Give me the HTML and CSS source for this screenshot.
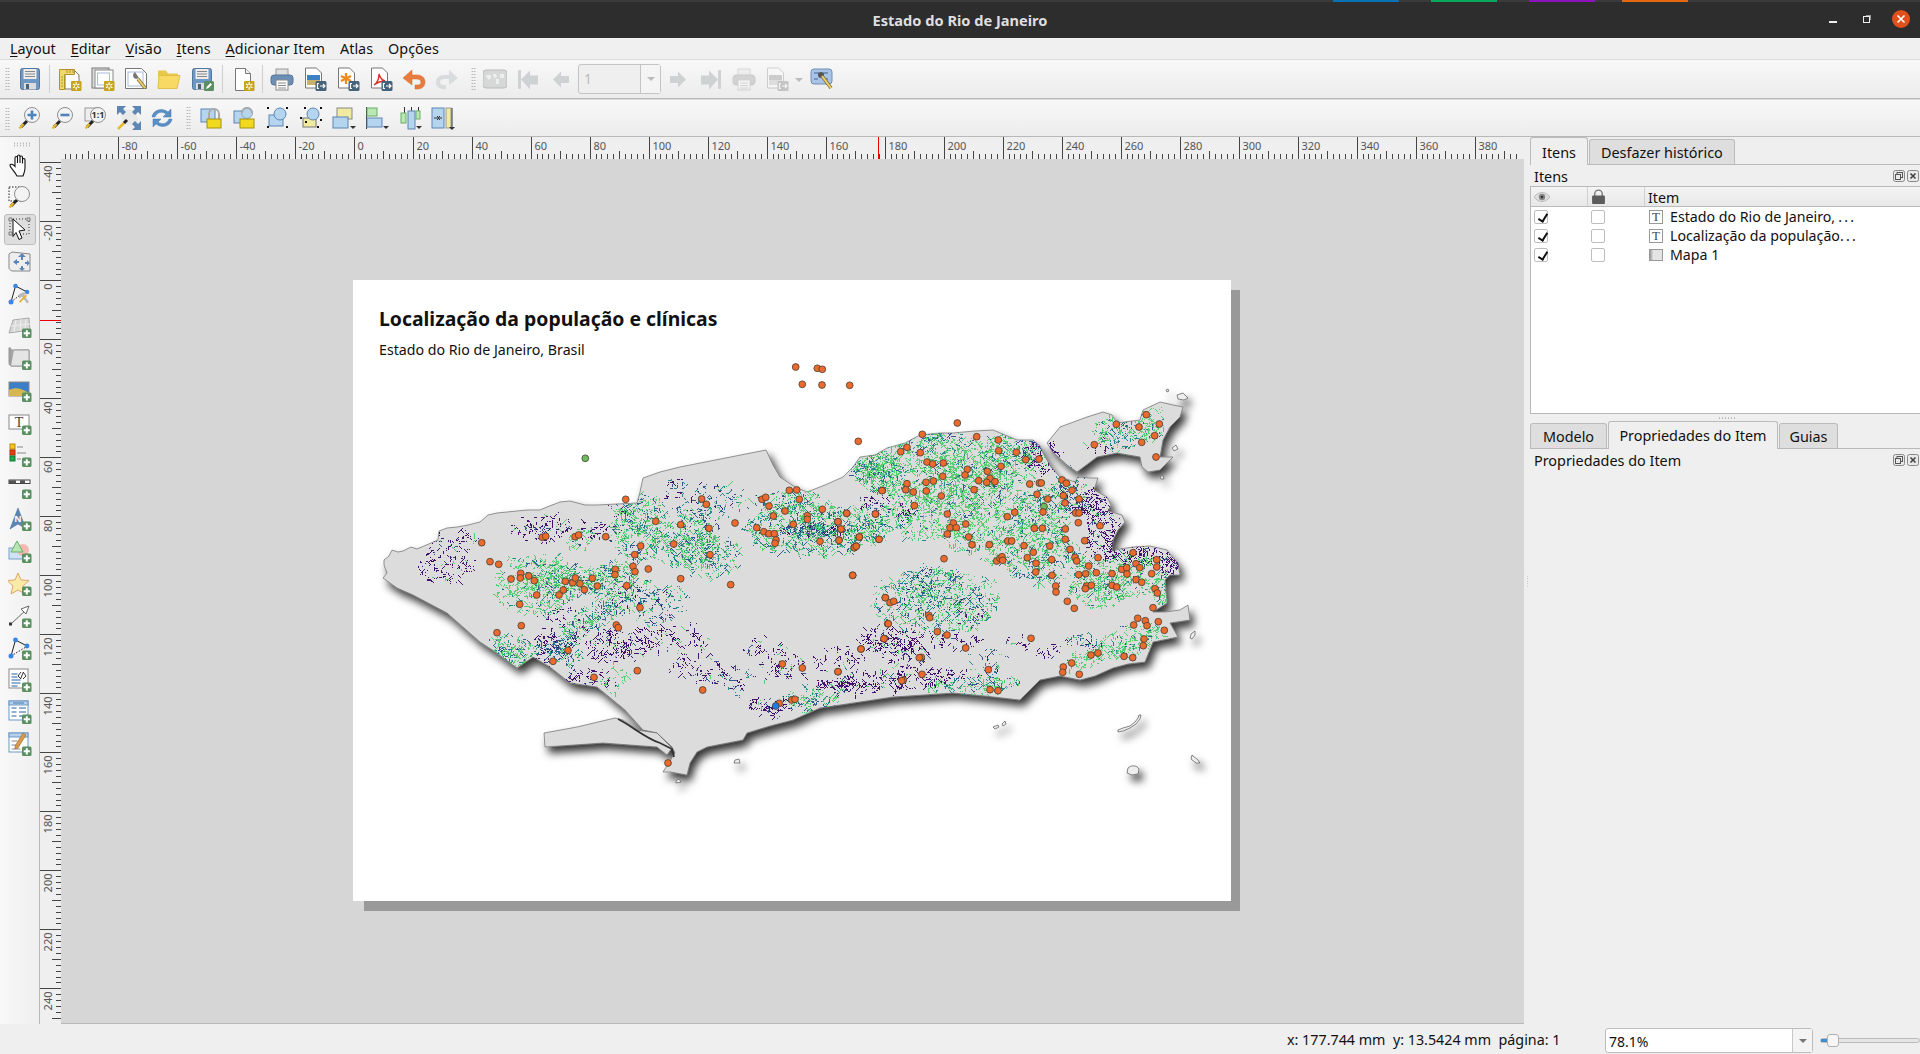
FILE: index.html
```html
<!DOCTYPE html>
<html lang="pt-BR">
<head>
<meta charset="utf-8">
<title>Estado do Rio de Janeiro</title>
<link rel="stylesheet" href="styles.css">
</head>
<body>
<svg class="sprite" aria-hidden="true">
<defs>
<linearGradient id="gGrey" x1="0" x2="1"><stop offset="0" stop-color="#999"/><stop offset="1" stop-color="#e8e8e8"/></linearGradient>
<symbol id="b-plus" viewBox="0 0 24 24"><rect x="14" y="14.5" width="9.5" height="9.5" rx="1.5" fill="#5a8f62"/><path d="M18.8 16.2v6.2M15.7 19.3h6.2" stroke="#fff" stroke-width="2"/></symbol>
<symbol id="b-star" viewBox="0 0 24 24"><rect x="13" y="14" width="10.5" height="10" rx="1" fill="#c6a51c"/><path d="M18.2 15.3v7.4M15 17l6.4 3.7M21.4 17L15 20.7" stroke="#fff" stroke-width="1.3"/><circle cx="18.2" cy="19" r="1.3" fill="#c6a51c"/></symbol>
<symbol id="b-exp" viewBox="0 0 24 24"><rect x="12.5" y="14" width="11" height="10" rx="1.5" fill="#46637c"/><path d="M16 16.5h-1.5v5H16M17 19h5M20 17l2 2-2 2" fill="none" stroke="#fff" stroke-width="1.2"/></symbol>
<symbol id="i-doc" viewBox="0 0 24 24"><path d="M4.5 1.5h10l5 5v17h-15z" fill="#fff" stroke="#777"/><path d="M14.5 1.5v5h5" fill="#eee" stroke="#777"/></symbol>
<symbol id="i-save" viewBox="0 0 24 24"><rect x="2.5" y="1.5" width="19" height="21" rx="2" fill="#6d97c4" stroke="#55789f"/><rect x="5.5" y="2" width="13" height="10" fill="#ececec"/><path d="M7 4.5h10M7 7h10M7 9.5h10" stroke="#888"/><rect x="6" y="16" width="12" height="6.5" fill="#dcdcdc"/><rect x="8" y="17" width="3" height="5" fill="#48607a"/></symbol>
<symbol id="i-saveas" viewBox="0 0 24 24"><use href="#i-save"/><rect x="14" y="14" width="10" height="10" rx="1.5" fill="#5a8f62"/><path d="M16 22l1-2.500 3.500-3.500 1.500 1.500-3.500 3.500z" fill="#fff"/></symbol>
<symbol id="i-new" viewBox="0 0 24 24"><path d="M7 3h9l5 5v14H7z" fill="#fff" stroke="#777"/><path d="M1.500 2.500h15v5H6.500v15h-5z" fill="#f2d76b" stroke="#b3912d"/><path d="M3 10h2M3 13h2M3 16h2M3 19h2M9 3v3M12 3v3M15 3v3" stroke="#b3912d"/><use href="#b-star"/></symbol>
<symbol id="i-dup" viewBox="0 0 24 24"><rect x="1" y="1" width="17" height="20" fill="#ddd" stroke="#777"/><rect x="4" y="3" width="18" height="18" fill="#fff" stroke="#888"/><rect x="6.500" y="6" width="12" height="12" fill="#fff" stroke="#a8bcdb"/><use href="#b-star"/></symbol>
<symbol id="i-manager" viewBox="0 0 24 24"><path d="M1.500 1.500h16l5 5v15h-21z" fill="#fff" stroke="#777"/><rect x="4" y="5" width="15" height="14" fill="none" stroke="#a8bcdb"/><path d="M11 5a4 4 0 0 0-1 6l2 1 3-1z" fill="#777"/><path d="M14 12l7 9" stroke="#7a6a30" stroke-width="3.500"/><path d="M14 12l7 9" stroke="#ecd069" stroke-width="2"/></symbol>
<symbol id="i-folder" viewBox="0 0 24 24"><path d="M1 3.500h8l2 3h10v3H1z" fill="#e9c84c"/><path d="M2 8.500h21l-3 13H1z" fill="#f7d963" stroke="#e0bf45"/></symbol>
<symbol id="i-newpage" viewBox="0 0 24 24"><use href="#i-doc"/><use href="#b-star"/></symbol>
<symbol id="i-print" viewBox="0 0 24 24"><rect x="6" y="2" width="12" height="7" fill="#e0e0e0" stroke="#999"/><rect x="1" y="8" width="22" height="10" rx="3" fill="#6d8fb5" stroke="#567799"/><rect x="6" y="13" width="12" height="10" fill="#fff" stroke="#888"/><path d="M8 16h8M8 18.500h8M8 21h8" stroke="#888"/></symbol>
<symbol id="i-expimg" viewBox="0 0 24 24"><path d="M2.500 1h11l5 5v15h-16z" fill="#fff" stroke="#777"/><rect x="4" y="8" width="13" height="5" fill="#3d80c5"/><rect x="4" y="13" width="13" height="5" fill="#c9b26a"/><use href="#b-exp"/></symbol>
<symbol id="i-expsvg" viewBox="0 0 24 24"><path d="M2.500 1h11l5 5v15h-16z" fill="#fff" stroke="#777"/><path d="M10 6v11M5 9l10 5M15 9L5 14" stroke="#f08a1c" stroke-width="2.300"/><use href="#b-exp"/></symbol>
<symbol id="i-exppdf" viewBox="0 0 24 24"><path d="M2.500 1h11l5 5v15h-16z" fill="#fff" stroke="#777"/><path d="M5 18c3-2 5-6 5-11 1 4 3 6 6 7-3 0-7 1-11 4z" fill="none" stroke="#d8322a" stroke-width="1.400"/><use href="#b-exp"/></symbol>
<symbol id="i-undo" viewBox="0 0 24 24"><path d="M1 11l9-8v5h5c5 0 8 3 8 7s-3 7-7 7h-3v-4h3c1.500 0 3-1 3-3s-2-3-4-3h-5v6z" fill="#e87b3e" stroke="#d6652a" stroke-width=".5"/></symbol>
<symbol id="i-redo" viewBox="0 0 24 24"><path d="M23 11l-9-8v5H9c-5 0-8 3-8 7s3 7 7 7h3v-4H8c-1.500 0-3-1-3-3s2-3 4-3h5v6z" fill="#d9dcdc"/></symbol>
<symbol id="i-atlas" viewBox="0 0 24 24"><rect x="0" y="3" width="24" height="18" rx="3" fill="#d6d8d8" stroke="#bbb"/><path d="M3 8h5v3l-2 2-2-2zM10 7h3l1 3-3 1zM13 12h3v5h-3zM17 7h4v4h-4z" fill="#eee"/></symbol>
<symbol id="i-first" viewBox="0 0 24 24"><rect x="2" y="3" width="3" height="19" rx="1" fill="#cfd2d2"/><path d="M5 12.500l9-9v5h8v9h-8v5z" fill="#cfd2d2"/></symbol>
<symbol id="i-prev" viewBox="0 0 24 24"><path d="M4 12.500l8-8v4.500h8v7h-8v4.500z" fill="#cfd2d2"/></symbol>
<symbol id="i-next" viewBox="0 0 24 24"><path d="M20 12.500l-8-8v4.500H4v7h8v4.500z" fill="#cfd2d2"/></symbol>
<symbol id="i-last" viewBox="0 0 24 24"><rect x="19" y="3" width="3" height="19" rx="1" fill="#cfd2d2"/><path d="M19 12.500l-9-9v5H2v9h8v5z" fill="#cfd2d2"/></symbol>
<symbol id="i-atset" viewBox="0 0 24 24"><rect x="1" y="2" width="21" height="15" rx="3" fill="#a8c3e6" stroke="#6d8fb5"/><path d="M4 6h5M13 6h5M4 12h4M14 12h4" stroke="#42628a"/><circle cx="11" cy="8" r="3" fill="#555"/><path d="M12 9l9 12" stroke="#7a6a30" stroke-width="3.500"/><path d="M12 9l9 12" stroke="#ecd069" stroke-width="2"/></symbol>
<symbol id="i-mag" viewBox="0 0 24 24"><path d="M3 21l6-6" stroke="#222" stroke-width="3"/><path d="M1.500 22.500l4-4.500" stroke="#e8b92d" stroke-width="2.500"/><circle cx="14" cy="9" r="7.500" fill="#f3f3f3" stroke="#8e8e8e"/></symbol>
<symbol id="i-zin" viewBox="0 0 24 24"><use href="#i-mag"/><path d="M14 4.500v9M9.500 9h9" stroke="#4d83bd" stroke-width="2.600"/></symbol>
<symbol id="i-zout" viewBox="0 0 24 24"><use href="#i-mag"/><path d="M9.500 9h9" stroke="#4d83bd" stroke-width="2.600"/></symbol>
<symbol id="i-z11" viewBox="0 0 24 24"><rect x="1" y="2" width="13" height="13" fill="#eee" stroke="#999"/><use href="#i-mag"/><text x="14" y="12" class="z11">1:1</text></symbol>
<symbol id="i-zfull" viewBox="0 0 24 24"><path d="M2 3l17 1 3 16-15-1z" fill="#e9e9e9"/><path d="M0 0h9l-3 3 3 3-3 3-3-3-3 3zM24 0h-9l3 3-3 3 3 3 3-3 3 3zM24 24h-9l3-3-3-3 3-3 3 3 3-3z" fill="#5d86b4"/><path d="M1 23l6-6" stroke="#e8b92d" stroke-width="2.500"/><path d="M7 17l3-3" stroke="#222" stroke-width="3"/></symbol>
<symbol id="i-refresh" viewBox="0 0 24 24"><path d="M2 11C3 4 12 1 18 6l3-3v8h-8l3-3c-4-3-9-2-11 3z" fill="#5a8fc8" stroke="#477ab1" stroke-width=".5"/><path d="M22 13c-1 7-10 10-16 5l-3 3v-8h8l-3 3c4 3 9 2 11-3z" fill="#5a8fc8" stroke="#477ab1" stroke-width=".5"/></symbol>
<symbol id="i-lock" viewBox="0 0 24 24"><rect x="1" y="3" width="14" height="13" fill="#b5d4ee" stroke="#5d86b4"/><path d="M9 14V8a5 5 0 0 1 10 0v6" fill="none" stroke="#aaa" stroke-width="2"/><rect x="7" y="13" width="14" height="9" fill="#f1d91d" stroke="#a2901a"/></symbol>
<symbol id="i-unlock" viewBox="0 0 24 24"><rect x="1" y="5" width="12" height="12" fill="#b5d4ee" stroke="#5d86b4"/><circle cx="14" cy="7" r="5.500" fill="#b5d4ee" stroke="#8fa8c0"/><path d="M9 7a5 5 0 0 1 10 0" fill="none" stroke="#aaa" stroke-width="2"/><rect x="7" y="13" width="14" height="9" fill="#f1d91d" stroke="#a2901a"/></symbol>
<symbol id="i-sel" viewBox="0 0 24 24"><rect x="3" y="9" width="14" height="11" fill="#b5d4ee" stroke="#5d86b4"/><circle cx="14" cy="8" r="6" fill="#b5d4ee" stroke="#5d86b4"/><path d="M1 1h2v2H1zM20 1h2v2h-2zM1 20h2v2H1zM20 20h2v2h-2z" fill="#111"/></symbol>
<symbol id="i-grp" viewBox="0 0 24 24"><rect x="4" y="12" width="13" height="9" fill="#f0eb9e" stroke="#777"/><circle cx="14" cy="8" r="6" fill="#b5d4ee" stroke="#5d86b4"/><path d="M1 11h2v2H1zM21 1h2v2h-2zM5 1h2v2H5zM21 13h2v2h-2zM6 15h2v2H6zM18 20h2v2h-2z" fill="#111"/></symbol>
<symbol id="i-raise" viewBox="0 0 24 24"><rect x="5" y="2" width="15" height="11" fill="#f0eb9e" stroke="#888"/><rect x="1" y="11" width="15" height="11" fill="#b5d4ee" stroke="#5d86b4"/><path d="M18 20h6l-3 3z" fill="#333"/></symbol>
<symbol id="i-left" viewBox="0 0 24 24"><path d="M1.500 1v22" stroke="#333"/><rect x="2" y="2" width="10" height="8" fill="#b9e8b4" stroke="#6cad66"/><rect x="2" y="12" width="15" height="9" fill="#b5d4ee" stroke="#5d86b4"/><path d="M18 20h6l-3 3z" fill="#333"/></symbol>
<symbol id="i-dist" viewBox="0 0 24 24"><path d="M6.500 1v6M13.500 1v4M20.500 1v6" stroke="#333"/><rect x="3" y="7" width="5" height="10" fill="#b9e8b4" stroke="#6cad66"/><rect x="10" y="5" width="7" height="18" fill="#b5d4ee" stroke="#5d86b4"/><rect x="18" y="5" width="4" height="8" fill="#b9e8b4" stroke="#6cad66"/><path d="M18 20h6l-3 3z" fill="#333"/></symbol>
<symbol id="i-resize" viewBox="0 0 24 24"><rect x="1" y="2" width="12" height="20" fill="#b5d4ee" stroke="#5d86b4"/><rect x="15" y="2" width="5" height="20" fill="#f0eb9e" stroke="#999"/><path d="M3 12h4M11 12H8M6 10l2 2-2 2M9 10l-2 2 2 2" fill="none" stroke="#333"/><path d="M21 2v21" stroke="#333"/><path d="M18 21h6l-3 3z" fill="#333"/></symbol>
<symbol id="t-hand" viewBox="0 0 24 24"><path d="M9 23C7 19 2 14 2 12.500c0-2 3-1.500 5 1V5c0-2 2.500-2 2.500 0v5V3.500c0-2 2.500-2 2.500 0V10V4.500c0-2 2.500-2 2.500 0v6V7c0-2 2.500-2 2.500 0v8c0 3-1 5-2 8z" fill="#fff" stroke="#111" stroke-width="1.100"/></symbol>
<symbol id="t-zsel" viewBox="0 0 24 24"><rect x="1" y="2" width="14" height="14" fill="none" stroke="#222" stroke-dasharray="1.500 1.500"/><use href="#i-mag"/></symbol>
<symbol id="t-sel" viewBox="0 0 24 24"><rect x="2" y="2" width="19" height="15" fill="none" stroke="#333" stroke-dasharray="1 2"/><path d="M1 1h3v3H1zM19 1h3v3h-3zM1 15h3v3H1z" fill="#ddd" stroke="#555" stroke-width=".7"/><path d="M5 2l12 11-6 1 3 7-3 1.500-3-7-3 4z" fill="#fff" stroke="#111"/></symbol>
<symbol id="t-move" viewBox="0 0 24 24"><path d="M4 2l18 2v17H4C2 20 1 19 1 18V4z" fill="#eee" stroke="#888"/><path d="M14 3l4 4h-3v3h-2V7h-3zM5 12l4-3v2h2v2H9v2zM14 21l-3-3h2v-2h2v2h2zM22 13l-3 3v-2h-2v-2h2v-2z" fill="#5d86b4"/></symbol>
<symbol id="t-nodes" viewBox="0 0 24 24"><path d="M3 20L7.500 4 19 10" fill="none" stroke="#222"/><path d="M3 20l9-7" stroke="#222" stroke-dasharray="1.500 1.500"/><circle cx="7.500" cy="4" r="2.300" fill="#3884e8"/><circle cx="19" cy="10" r="2.300" fill="#3884e8"/><circle cx="3" cy="20" r="2.500" fill="#3884e8"/><path d="M11 13c2-3 6-3 8-1l-3 1 5 7-2 1.500-5-7-3 2z" fill="#bbb"/><path d="M12 21l7-7-1.500-1.500-6.500 7z" fill="#e3b43a"/></symbol>
<symbol id="t-m3d" viewBox="0 0 24 24"><path d="M5 6l16-2 1 12-21 3z" fill="#d8d8d8" stroke="#aaa"/><path d="M8 6l-2 12M13 5l-1 12M18 5l-1 11M3 12l19-2" stroke="#eee"/><use href="#b-plus"/></symbol>
<symbol id="t-map" viewBox="0 0 24 24"><path d="M3 4h18v16H3C1 19 1 18 1 16V2c1-1 2 0 2 2z" fill="url(#gGrey)" stroke="#999"/><path d="M6 4h15v16H3" fill="#e4e4e4" stroke="#999"/><use href="#b-plus"/></symbol>
<symbol id="t-pic" viewBox="0 0 24 24"><rect x="1" y="4" width="20" height="14" fill="#3a7fc8" stroke="#888"/><path d="M1 12c6-3 12-2 20 3v3H1z" fill="#d5b64f"/><use href="#b-plus"/></symbol>
<symbol id="t-label" viewBox="0 0 24 24"><rect x="1" y="4" width="20" height="14" fill="#fff" stroke="#888"/><text x="11" y="15.500" class="tee">T</text><use href="#b-plus"/></symbol>
<symbol id="t-leg" viewBox="0 0 24 24"><rect x="2" y="1" width="5" height="5" fill="#f5c518" stroke="#c08a10"/><rect x="2" y="7" width="5" height="5" fill="#e8400f" stroke="#b02a05"/><rect x="2" y="13" width="5" height="5" fill="#1fa84a" stroke="#0e7a32"/><path d="M9 4h6M9 10h9M9 16h4" stroke="#aaa" stroke-width="1.500"/><use href="#b-plus"/></symbol>
<symbol id="t-scale" viewBox="0 0 24 24"><rect x="1" y="5" width="21" height="3.500" fill="#fff" stroke="#444"/><path d="M1 6.700h7M12 6.700h5" stroke="#555" stroke-width="3"/><use href="#b-plus"/></symbol>
<symbol id="t-north" viewBox="0 0 24 24"><path d="M10 1L2 22l8-5 8 5z" fill="#5d86b4" stroke="#3c648f" stroke-width=".5"/><text x="10" y="15" class="en">N</text><use href="#b-plus"/></symbol>
<symbol id="t-shape" viewBox="0 0 24 24"><rect x="1" y="9" width="15" height="11" fill="#cfe3f5" stroke="#7ba0c8"/><circle cx="15" cy="11" r="6" fill="#f5b8b0"/><path d="M9 2l6 11H3z" fill="#b7e8b4" stroke="#6cad66"/><use href="#b-plus"/></symbol>
<symbol id="t-star" viewBox="0 0 24 24"><path d="M10 1l3 7 8 .5-6 5.500 2 8-7-4-7 4 2-8-6-5.500 8-.5z" fill="#fbe9a8" stroke="#dba76a"/><use href="#b-plus"/></symbol>
<symbol id="t-arrow" viewBox="0 0 24 24"><path d="M3 20L18 6" stroke="#666"/><rect x="1" y="18.500" width="3" height="3" fill="#333"/><path d="M21 2l-8 3 5 5z" fill="#fff" stroke="#666"/><use href="#b-plus"/></symbol>
<symbol id="t-node" viewBox="0 0 24 24"><path d="M3 20L7.500 4 19 10" fill="none" stroke="#222"/><path d="M3 20l15-9" stroke="#222" stroke-dasharray="1.500 1.500"/><circle cx="7.500" cy="4" r="2.400" fill="#3884e8"/><circle cx="19" cy="10" r="2.400" fill="#3884e8"/><circle cx="3" cy="20" r="2.500" fill="#3884e8"/><use href="#b-plus"/></symbol>
<symbol id="t-html" viewBox="0 0 24 24"><rect x="1" y="1" width="19" height="19" fill="#fff" stroke="#888"/><path d="M3.500 6h6M3.500 9h6M3.500 12h9M3.500 15h9M3.500 18h6" stroke="#6d97c4" stroke-width="1.500"/><path d="M13 4l-3 4 3 3M15 4l3 4-3 3M12.500 11l3-7" fill="none" stroke="#333"/><use href="#b-plus"/></symbol>
<symbol id="t-table" viewBox="0 0 24 24"><rect x="1" y="1" width="19" height="19" fill="#fff" stroke="#6d97c4"/><rect x="1" y="1" width="19" height="4" fill="#b5d0ec" stroke="#6d97c4"/><path d="M5 3h11M3.500 8h5M11 8h7M3.500 12h5M11 12h7M3.500 16h5M11 16h7" stroke="#6d97c4" stroke-width="1.300"/><use href="#b-plus"/></symbol>
<symbol id="t-fixed" viewBox="0 0 24 24"><rect x="1" y="1" width="19" height="19" fill="#fff" stroke="#6d97c4"/><rect x="1" y="1" width="19" height="4" fill="#b5d0ec" stroke="#6d97c4"/><path d="M3.500 9h6M3.500 13h6M3.500 17h9" stroke="#8a8a8a"/><path d="M7 14L15 1l3 2-8 13-3 1z" fill="#d89a4a" stroke="#8a5c20" stroke-width=".5"/><use href="#b-plus"/></symbol>
<symbol id="l-t" viewBox="0 0 14 14"><rect x=".5" y=".5" width="13" height="13" fill="#fff" stroke="#999"/><text x="7" y="11" class="tee tee-s">T</text></symbol>
<symbol id="l-map" viewBox="0 0 14 14"><rect x=".5" y="1.500" width="13" height="11" fill="#e4e4e4" stroke="#999"/><rect x="1" y="2" width="3.500" height="10" fill="url(#gGrey)"/></symbol>
<symbol id="l-eye" viewBox="0 0 16 12"><path d="M0 6c4-6 12-6 16 0-4 6-12 6-16 0z" fill="#ddd" stroke="#aaa" stroke-width=".7"/><circle cx="8" cy="6" r="3.200" fill="#888"/><circle cx="8" cy="6" r="1.300" fill="#333"/></symbol>
<symbol id="l-lock" viewBox="0 0 12 14"><path d="M2.500 7V4.500a3.500 3.500 0 0 1 7 0V7" fill="none" stroke="#777" stroke-width="1.300"/><rect x="0" y="6" width="12" height="8" rx="1" fill="#5c5c5c"/></symbol>
<symbol id="l-float" viewBox="0 0 12 12"><rect x=".5" y=".5" width="11" height="11" rx="2" fill="#e9e9e9" stroke="#888"/><rect x="4" y="2.500" width="5.500" height="5" fill="none" stroke="#555"/><rect x="2.500" y="4.500" width="5" height="5" fill="#e9e9e9" stroke="#555"/></symbol>
<symbol id="l-close" viewBox="0 0 12 12"><rect x=".5" y=".5" width="11" height="11" rx="2" fill="#e9e9e9" stroke="#888"/><path d="M3.500 3.500l5 5M8.500 3.500l-5 5" stroke="#444" stroke-width="1.600"/></symbol>
<path id="land" d="M384 560L389 556 392 550 398 552 403 551 411 547 417 549 438 540 439 531 447 528 457 527 468 525 480 522 488 515 497 513 507 512 527 510 540 510 547 507 560 502 570 501 585 505 597 505 637 503 640 492 643 478 660 472 680 467 766 450 773 465 780 477 795 487 807 492 825 485 843 477 853 467 860 457 875 455 887 448 905 443 920 435 940 433 953 433 975 431 993 430 1005 435 1017 440 1033 440 1040 446 1043 453 1051 467 1060 477 1075 482 1078 477 1090 478 1098 478 1094 490 1107 497 1111 505 1108 511 1122 515 1125 522 1118 530 1113 540 1112 551 1120 549 1133 547 1150 546 1167 550 1172 557 1178 563 1180 575 1170 575 1165 580 1167 603 1153 612 1165 612 1180 610 1188 605 1190 620 1170 623 1178 637 1153 642 1145 662 1128 664 1113 668 1095 676 1080 680 1060 676 1040 680 1030 690 1020 700 985 696 953 693 893 697 820 708 793 720 770 726 747 733 743 740 707 747 697 752 690 763 687 775 670 772 663 772 675 753 672 747 657 733 643 730 625 710 597 687 570 683 550 667 533 657 517 668 497 653 480 642 447 613 413 595 397 588 383 578 387 573 384 565z"/>
<path id="spit" d="M544 733L545 747 603 743 657 747 667 755 672 748 657 733 637 730 623 720 615 718 577 727z"/>
<path id="isle" d="M1047 443L1060 427 1087 417 1103 412 1112 415 1117 423 1140 420 1143 410 1160 402 1173 405 1183 407 1180 417 1170 427 1163 440 1160 457 1173 457 1160 470 1148 472 1142 467 1140 457 1117 453 1097 457 1077 472 1067 465 1053 452z"/>
<clipPath id="clipLand"><use href="#land"/><use href="#isle"/></clipPath>
<filter id="shadow" x="-10%" y="-10%" width="120%" height="125%"><feDropShadow dx="4" dy="6" stdDeviation="4.500" flood-color="#000" flood-opacity=".8"/></filter>
</defs>
</svg>

<header class="titlebar">
  <span class="strip strip-b"></span><span class="strip strip-g"></span><span class="strip strip-p"></span><span class="strip strip-o"></span>
  <span class="wintitle">Estado do Rio de Janeiro</span>
  <span class="winbtns"><i class="w-min"></i><i class="w-max"></i><i class="w-close"><svg viewBox="0 0 18 18"><path d="M5.500 5.500l7 7M12.500 5.500l-7 7" stroke="#fff" stroke-width="1.600"/></svg></i></span>
</header>

<nav class="menubar">
  <span><u>L</u>ayout</span><span><u>E</u>ditar</span><span><u>V</u>isão</span><span><u>I</u>tens</span><span><u>A</u>dicionar Item</span><span>Atlas</span><span>Opções</span>
</nav>

<div class="toolbar">
  <i class="grip"></i>
  <b class="tb"><svg class="ic"><use href="#i-save"/></svg></b>
  <i class="sep s7"></i>
  <b class="tb"><svg class="ic"><use href="#i-new"/></svg></b>
  <b class="tb"><svg class="ic"><use href="#i-dup"/></svg></b>
  <b class="tb"><svg class="ic"><use href="#i-manager"/></svg></b>
  <b class="tb"><svg class="ic"><use href="#i-folder"/></svg></b>
  <b class="tb"><svg class="ic"><use href="#i-saveas"/></svg></b>
  <i class="sep s8"></i>
  <b class="tb"><svg class="ic"><use href="#i-newpage"/></svg></b>
  <i class="sep s6"></i>
  <b class="tb"><svg class="ic"><use href="#i-print"/></svg></b>
  <b class="tb"><svg class="ic"><use href="#i-expimg"/></svg></b>
  <b class="tb"><svg class="ic"><use href="#i-expsvg"/></svg></b>
  <b class="tb"><svg class="ic"><use href="#i-exppdf"/></svg></b>
  <b class="tb"><svg class="ic"><use href="#i-undo"/></svg></b>
  <b class="tb"><svg class="ic"><use href="#i-redo"/></svg></b>
  <i class="grip2"></i>
  <b class="tb"><svg class="ic"><use href="#i-atlas"/></svg></b>
  <b class="tb"><svg class="ic"><use href="#i-first"/></svg></b>
  <b class="tb"><svg class="ic"><use href="#i-prev"/></svg></b>
  <span class="spin"><em>1</em><s></s></span>
  <b class="tb"><svg class="ic"><use href="#i-next"/></svg></b>
  <b class="tb"><svg class="ic"><use href="#i-last"/></svg></b>
  <b class="tb off"><svg class="ic"><use href="#i-print"/></svg></b>
  <b class="tb off"><svg class="ic"><use href="#i-expimg"/></svg></b>
  <i class="drop"></i>
  <b class="tb"><svg class="ic"><use href="#i-atset"/></svg></b>
</div>

<div class="toolbar tb2">
  <i class="grip"></i>
  <b class="tb"><svg class="ic"><use href="#i-zin"/></svg></b>
  <b class="tb"><svg class="ic"><use href="#i-zout"/></svg></b>
  <b class="tb"><svg class="ic"><use href="#i-z11"/></svg></b>
  <b class="tb"><svg class="ic"><use href="#i-zfull"/></svg></b>
  <b class="tb"><svg class="ic"><use href="#i-refresh"/></svg></b>
  <i class="grip3"></i>
  <b class="tb"><svg class="ic"><use href="#i-lock"/></svg></b>
  <b class="tb"><svg class="ic"><use href="#i-unlock"/></svg></b>
  <b class="tb"><svg class="ic"><use href="#i-sel"/></svg></b>
  <b class="tb"><svg class="ic"><use href="#i-grp"/></svg></b>
  <b class="tb"><svg class="ic"><use href="#i-raise"/></svg></b>
  <b class="tb"><svg class="ic"><use href="#i-left"/></svg></b>
  <b class="tb"><svg class="ic"><use href="#i-dist"/></svg></b>
  <b class="tb"><svg class="ic"><use href="#i-resize"/></svg></b>
</div>

<main class="main">
  <aside class="toolbox">
    <i class="gripv"></i>
    <b class="tool"><svg class="ic"><use href="#t-hand"/></svg></b>
    <b class="tool"><svg class="ic"><use href="#t-zsel"/></svg></b>
    <b class="tool active"><svg class="ic"><use href="#t-sel"/></svg></b>
    <b class="tool"><svg class="ic"><use href="#t-move"/></svg></b>
    <b class="tool"><svg class="ic"><use href="#t-nodes"/></svg></b>
    <b class="tool"><svg class="ic"><use href="#t-m3d"/></svg></b>
    <b class="tool"><svg class="ic"><use href="#t-map"/></svg></b>
    <b class="tool"><svg class="ic"><use href="#t-pic"/></svg></b>
    <b class="tool"><svg class="ic"><use href="#t-label"/></svg></b>
    <b class="tool"><svg class="ic"><use href="#t-leg"/></svg></b>
    <b class="tool"><svg class="ic"><use href="#t-scale"/></svg></b>
    <b class="tool"><svg class="ic"><use href="#t-north"/></svg></b>
    <b class="tool"><svg class="ic"><use href="#t-shape"/></svg></b>
    <b class="tool"><svg class="ic"><use href="#t-star"/></svg></b>
    <b class="tool"><svg class="ic"><use href="#t-arrow"/></svg></b>
    <b class="tool"><svg class="ic"><use href="#t-node"/></svg></b>
    <b class="tool"><svg class="ic"><use href="#t-html"/></svg></b>
    <b class="tool"><svg class="ic"><use href="#t-table"/></svg></b>
    <b class="tool"><svg class="ic"><use href="#t-fixed"/></svg></b>
  </aside>

  <section class="workspace">
    <div class="corner"></div>
    <svg class="ruler" id="hruler"></svg>
    <svg class="ruler" id="vruler"></svg>
    <div class="canvas">
      <div class="shadow"></div>
      <div class="page">
        <h1>Localização da população e clínicas</h1>
        <p>Estado do Rio de Janeiro, Brasil</p>
        <svg class="map" viewBox="353 280 878 621">
          <g filter="url(#shadow)" class="landg">
            <use href="#land"/>
            <use href="#spit"/>
            <use href="#isle"/>
            <path class="islet" d="M1118 730l5-2 7-2 5-4 3-4 1-3 2 0-1 4-4 5-6 4-7 3-5 1zM1128 768c3-3 9-3 11 1l-1 5-6 1-5-2zM1192 755l6 5 2 3-4 0-5-4zM993 727l5-2 1 2-4 2zM1002 724l3-3 1 3-3 2zM1177 395l6-2 5 5-4 2-6-1zM1172 448l4-3 2 4-4 2zM1167 389l2 1-1 2-2-1zM1160 476l3 0 1 3-3 0zM1191 634l4-3 0 4-3 4-2-1zM735 760l4-1 1 4-6 0zM676 781l3-2 2 3-5 1z"/>
          </g>
          <path class="river" d="M618 719C632 726 645 738 660 743L672 749 674 757" />
          <g clip-path="url(#clipLand)"><g id="speck" class="speck"></g></g>
          <g id="dots" class="dots"></g>
        </svg>
      </div>
    </div>
  </section>

  <div class="splitter"><i></i></div>

  <aside class="panel">
    <div class="tabs">
      <span class="tab on t-itens">Itens</span><span class="tab">Desfazer histórico</span>
    </div>
    <div class="dockhead"><span>Itens</span><svg class="dk"><use href="#l-float"/></svg><svg class="dk"><use href="#l-close"/></svg></div>
    <div class="tree">
      <div class="thead">
        <span class="c1"><svg class="hd-eye"><use href="#l-eye"/></svg></span>
        <span class="c2"><svg class="hd-lock"><use href="#l-lock"/></svg></span>
        <span class="c3">Item</span>
      </div>
      <div class="row"><span class="c1"><i class="chk on"></i></span><span class="c2"><i class="chk"></i></span><span class="c3"><svg class="lic"><use href="#l-t"/></svg>Estado do Rio de Janeiro,<span class="ell e-wide">...</span></span></div>
      <div class="row"><span class="c1"><i class="chk on"></i></span><span class="c2"><i class="chk"></i></span><span class="c3"><svg class="lic"><use href="#l-t"/></svg>Localização da população<span class="ell">...</span></span></div>
      <div class="row"><span class="c1"><i class="chk on"></i></span><span class="c2"><i class="chk"></i></span><span class="c3"><svg class="lic"><use href="#l-map"/></svg>Mapa 1</span></div>
    </div>
    <div class="hsplit"><i></i></div>
    <div class="tabs tabs2">
      <span class="tab t-mod">Modelo</span><span class="tab on t-prop">Propriedades do Item</span><span class="tab t-gui">Guias</span>
    </div>
    <div class="dockhead"><span>Propriedades do Item</span><svg class="dk"><use href="#l-float"/></svg><svg class="dk"><use href="#l-close"/></svg></div>
  </aside>
</main>

<footer class="status">
  <span class="coords">x: 177.744 mm&nbsp; y: 13.5424 mm&nbsp; página: 1</span>
  <span class="zoomcombo"><em>78.1%</em><s></s></span>
  <span class="slider"><i></i></span>
</footer>
<script src="app.js"></script>
</body>
</html>
```
FILE: styles.css
```css
* { box-sizing: border-box; }
html, body { margin: 0; padding: 0; height: 100%; }
body {
  width: 1920px; height: 1054px; overflow: hidden;
  display: flex; flex-direction: column;
  background: #efefef; color: #111;
  font-family: "Noto Sans", sans-serif; font-size: 14px;
}
i, em, s, b { font-style: normal; font-weight: normal; text-decoration: none; display: block; }
.sprite { position: absolute; width: 0; height: 0; }

.titlebar {
  height: 38px; flex: none; position: relative;
  background: #2d2d2d; border-top: 2px solid #3a3a3a;
  display: flex; align-items: center; justify-content: center;
}
.strip { position: absolute; top: -2px; height: 2px; width: 66px; }
.strip-b { left: 1333px; background: #0b6fb3; }
.strip-g { left: 1431px; background: #0aa85c; }
.strip-p { left: 1529px; background: #8d14bb; }
.strip-o { left: 1622px; background: #e4660f; }
.wintitle { color: #dfdfdf; font-weight: 700; font-size: 14.6px; margin-top: -1px; }
.winbtns { position: absolute; right: 0; top: 0; height: 36px; width: 100px; }
.winbtns i { position: absolute; }
.w-min { left: 9px; top: 19px; width: 8px; height: 1.500px; background: #eee; }
.w-max { left: 43px; top: 14px; width: 7px; height: 7px; border: 1.500px solid #eee; box-shadow: 2px -2px 0 -1px #999; }
.w-close { left: 72px; top: 8px; width: 18px; height: 18px; border-radius: 50%; background: #e2501e; }
.w-close svg { display: block; width: 18px; height: 18px; }

.menubar {
  height: 21px; flex: none; display: flex; gap: 15px; padding-left: 10px; align-items: center;
  background: #f0f0f0; font-size: 14.4px; white-space: nowrap;
}
.menubar u { text-underline-offset: 2px; }

.toolbar {
  height: 40px; flex: none; display: flex; align-items: center; position: relative;
  padding-left: 13px; background: linear-gradient(#f8f8f8, #ececec);
  border-top: 1px solid #dcdcdc; border-bottom: 1px solid #b8b8b8;
}
.tb2 { height: 38px; }
.tb { width: 33px; height: 30px; display: flex; align-items: center; justify-content: center; flex: none; }
.tb.off { filter: grayscale(1); opacity: .3; }
.ic { width: 24px; height: 24px; display: block; }
.sep { width: 1px; height: 28px; background: #cfcfcf; flex: none; }
.s7 { margin: 0 3px; }
.s8 { margin: 0 3.500px; }
.s6 { margin: 0 2.500px; }
.grip, .grip2, .grip3 {
  flex: none; width: 5px; height: 24px;
  background: radial-gradient(circle, #aaa 0.7px, transparent 0.9px) 0 0 / 2.500px 3px;
}
.grip { position: absolute; left: 5px; top: 7px; }
.grip2 { margin: 0 2px 0 8px; }
.grip3 { margin: 0 4px 0 8px; }
.drop { width: 0; height: 0; border: 4px solid transparent; border-top: 4px solid #bbb; border-bottom: 0; margin: 2px 2px 0 2px; flex: none; }
.spin {
  width: 83px; height: 30px; flex: none; margin-left: 1px;
  border: 1px solid #c4c4c4; border-radius: 3px; background: #efefef;
  display: flex; color: #bbb; font-size: 14px;
}
.spin em { flex: 1; padding: 4px 5px; border-right: 1px solid #c4c4c4; }
.spin s { width: 19px; position: relative; background: #f4f4f4; }
.spin s::after, .zoomcombo s::after {
  content: ""; position: absolute; left: 6px; top: 12px;
  border: 4px solid transparent; border-top: 4px solid #bbb; border-bottom: 0;
}

.main { flex: 1; min-height: 0; display: flex; }
.toolbox {
  width: 40px; flex: none; background: linear-gradient(90deg, #f8f8f8, #efefef);
  border-right: 1px solid #b9b9b9; padding-top: 12px; position: relative;
}
.gripv { position: absolute; left: 13px; top: 5px; width: 17px; height: 5px; background: radial-gradient(circle, #aaa 0.7px, transparent 0.9px) 0 0 / 3px 2.500px; }
.tool { width: 39px; height: 32.200px; display: flex; align-items: center; justify-content: center; position: relative; }
.tool.active::before { content: ""; position: absolute; left: 4px; right: 3px; top: 1px; bottom: 1px; border: 1px solid #bdbdbd; border-radius: 3px; background: #dedede; }
.tool .ic { position: relative; }

.workspace { width: 1484px; flex: none; display: grid; grid-template-columns: 21px 1fr; grid-template-rows: 22px 1fr; }
.corner { background: #efefef; }
.ruler { display: block; width: 100%; height: 100%; background: #efefef; overflow: hidden; }
.ruler text { font: 11px "Noto Sans", sans-serif; fill: #555; }
.ruler .ticks { stroke: #444; stroke-width: 1; fill: none; shape-rendering: crispEdges; }
.ruler .red { stroke: #e00; stroke-width: 1; shape-rendering: crispEdges; }
.canvas { position: relative; overflow: hidden; background: #d6d6d6; border-bottom: 1px solid #b9b9b9; }
.page { position: absolute; left: 292px; top: 121px; width: 878px; height: 621px; background: #fff; overflow: hidden; }
.shadow { position: absolute; left: 303px; top: 131px; width: 876px; height: 621px; background: #999; }
.page h1 { position: absolute; left: 26px; top: 25px; margin: 0; font-size: 19.4px; font-weight: 700; color: #111; white-space: nowrap; }
.page p { position: absolute; left: 26px; top: 60px; margin: 0; font-size: 14.2px; color: #111; white-space: nowrap; }
.map { position: absolute; inset: 0; width: 878px; height: 621px; display: block; }
.landg { fill: #dcdcdc; stroke: #6a6a6a; stroke-width: .7; stroke-linejoin: round; }
.islet { fill: #eee; stroke: #555; stroke-width: .7; }
.river { fill: none; stroke: #333; stroke-width: 1.800; }
.speck path { shape-rendering: crispEdges; stroke: none; }
.dots circle { stroke: #473f36; stroke-width: .8; }
.dot-o { fill: #ec6b2c; }
.dot-g { fill: #6dbb5e; }
.dot-b { fill: #1b7fe0; }

.splitter { width: 6px; flex: none; display: flex; align-items: center; justify-content: center; background: #efefef; }
.splitter i { width: 3px; height: 12px; background: radial-gradient(circle, #bbb 0.6px, transparent 0.8px) 0 0 / 3px 2.500px; }

.panel { flex: 1; min-width: 0; display: flex; flex-direction: column; background: #efefef; font-size: 14.4px; }
.tabs { height: 28px; flex: none; display: flex; align-items: flex-end; position: relative; border-bottom: 1px solid #b9b9b9; padding-top: 1px; }
.tab {
  height: 25px; padding: 1px 11px 0; display: flex; align-items: center; flex: none; white-space: nowrap;
  background: #dedede; border: 1px solid #bbb; border-bottom: none; border-radius: 3px 3px 0 0; margin-right: 1px;
}
.tab.on { height: 28px; background: #efefef; position: relative; top: 1px; }
.t-itens { width: 58px; }
.t-mod { width: 77px; justify-content: center; }
.t-prop { width: 170px; padding: 0; justify-content: center; }
.t-gui { width: 59px; justify-content: center; }
.dockhead { height: 21px; flex: none; display: flex; align-items: center; padding: 1px 1px 0 4px; gap: 2px; }
.dockhead span { flex: 1; }
.dk { width: 12px; height: 12px; display: block; }
.tree { height: 228px; flex: none; background: #fff; border: 1px solid #b9b9b9; border-right: none; font-size: 14.2px; }
.thead { height: 20px; display: flex; background: linear-gradient(#f4f4f4, #e8e8e8); border-bottom: 1px solid #bbb; }
.thead .c1, .thead .c2 { border-right: 1px solid #cfcfcf; }
.thead .c3 { padding-top: 1px; }
.row { height: 19.200px; display: flex; align-items: center; }
.c1, .c2 { width: 57px; flex: none; display: flex; align-items: center; padding-left: 3px; }
.c3 { flex: 1; display: flex; align-items: center; padding-left: 3px; white-space: nowrap; }
.row .c3 { padding-left: 4px; }
.ell { letter-spacing: 2.200px; }
.e-wide { margin-left: 3px; }
.hd-eye { width: 16px; height: 12px; display: block; }
.hd-lock { width: 13px; height: 15px; display: block; margin-left: 1px; }
.lic { width: 14px; height: 14px; display: block; margin-right: 7px; flex: none; }
.chk { width: 14px; height: 14px; border: 1px solid #bdbdbd; border-radius: 2px; background: #fff; position: relative; }
.chk.on::after { content: ""; position: absolute; left: 4.500px; top: 1.500px; width: 4px; height: 8px; border: solid #111; border-width: 0 2px 2px 0; transform: rotate(32deg); }
.hsplit { height: 7px; flex: none; display: flex; justify-content: center; align-items: center; }
.hsplit i { width: 17px; height: 2px; background: radial-gradient(circle, #bbb 0.6px, transparent 0.8px) 0 0 / 3px 2px; margin-right: -3px; }
.tabs2 { height: 28px; }

.status { height: 30px; flex: none; position: relative; background: #efefef; }
.coords { position: absolute; left: 1287px; top: 6px; font-size: 14.3px; white-space: nowrap; }
.zoomcombo { position: absolute; left: 1605px; top: 4px; width: 208px; height: 25px; background: #fff; border: 1px solid #bdbdbd; border-radius: 3px; display: flex; font-size: 14px; }
.zoomcombo em { flex: 1; padding: 3px 3px; border-right: 1px solid #c8c8c8; }
.zoomcombo s { width: 19px; position: relative; background: #f4f4f4; }
.zoomcombo s::after { top: 10px; border-top-color: #777; }
.slider { position: absolute; left: 1820px; top: 14px; width: 100px; height: 5px; border: 1px solid #bbb; border-radius: 3px; background: #e6e6e6; }
.slider::before { content: ""; position: absolute; left: 0; top: 0; width: 8px; height: 3px; background: #3d8fd1; }
.slider i { position: absolute; left: 6px; top: -5px; width: 12px; height: 13px; border: 1px solid #b0b0b0; border-radius: 3px; background: #f6f6f6; }
.z11 { font: 700 9px "Noto Sans", sans-serif; fill: #333; text-anchor: middle; }
.tee { font: 14px "Liberation Serif", serif; fill: #444; text-anchor: middle; }
.tee-s { font-size: 13px; }
.en { font: 700 9px "Noto Sans", sans-serif; fill: #fff; text-anchor: middle; }
```
FILE: app.js
```js
var NS = 'http://www.w3.org/2000/svg';
function el(tag, attrs, parent, text) {
  var e = document.createElementNS(NS, tag);
  for (var k in attrs) e.setAttribute(k, attrs[k]);
  if (text !== undefined) e.textContent = text;
  parent.appendChild(e);
  return e;
}

/* rulers */
var MM = 2.95;
(function () {
  var h = document.getElementById('hruler'), H0 = 292.6, d = '';
  for (var v = -98; v <= 394; v += 2) {
    var x = Math.round(H0 + v * MM) + .5;
    if (v % 20 === 0) {
      d += 'M' + x + ' 0V22';
      el('text', { x: x + 3, y: 13 }, h, String(v));
    } else if (v % 10 === 0) d += 'M' + x + ' 14V22';
    else d += 'M' + x + ' 17V22';
  }
  el('path', { d: d, class: 'ticks' }, h);
  el('path', { d: 'M817.5 0V22', class: 'red' }, h);

  var r = document.getElementById('vruler'), V0 = 121.3; d = '';
  for (v = -40; v <= 250; v += 2) {
    var y = Math.round(V0 + v * MM) + .5;
    if (v % 20 === 0) {
      d += 'M0 ' + y + 'H21';
      el('text', { x: 12, y: 0, 'text-anchor': 'end', transform: 'translate(0 ' + (y + 3) + ') rotate(-90 12 0)' }, r, String(v));
    } else if (v % 10 === 0) d += 'M12 ' + y + 'H21';
    else d += 'M16 ' + y + 'H21';
  }
  el('path', { d: d, class: 'ticks' }, r);
  el('path', { d: 'M0 161.500H21', class: 'red' }, r);
})();

/* population speckle: seeded short dotted walks in ellipses */
var COL = { g: '#55cc72', t: '#24888c', b: '#33598f', p: '#44116e' };
var MIX = {
  G: 'ggggggggggtb',
  M: 'ggggggtttbb',
  B: 'bbbttggp',
  P: 'ppppppppbg',
  D: 'pppbbbtt'
};
/* cx, cy, rx, ry, deg, walks, palette */
var CL = [
  [945,470,72,34,0,300,'G'],[930,510,52,30,0,210,'G'],[985,470,52,32,0,180,'G'],[925,440,42,14,0,80,'M'],
  [880,472,25,20,0,110,'M'],[1005,530,62,36,0,260,'G'],[1040,515,28,30,0,110,'M'],[1045,560,42,24,0,130,'M'],
  [1015,450,34,18,0,70,'M'],[1040,458,20,18,0,60,'P'],[1068,490,18,22,0,70,'B'],[1090,505,16,18,0,50,'P'],[1105,535,18,26,0,70,'P'],
  [1120,575,46,22,0,120,'G'],[1140,555,28,10,0,60,'P'],[1100,590,32,18,0,90,'G'],[1170,565,9,10,0,24,'P'],[1165,590,12,18,0,40,'G'],
  [1130,640,34,16,-15,70,'G'],[1095,655,32,10,-20,40,'G'],[1085,640,20,9,0,16,'B'],
  [1120,432,28,17,0,80,'M'],[1150,425,14,18,0,36,'G'],[1095,445,18,8,0,6,'P'],
  [810,530,66,26,0,300,'M'],[795,505,36,16,0,80,'M'],[815,530,36,6,0,80,'D'],[870,525,18,18,0,60,'M'],
  [870,465,24,16,0,70,'M'],[880,505,28,10,0,20,'P'],[905,515,12,9,0,12,'P'],
  [640,528,30,34,20,170,'M'],[685,540,34,28,0,140,'M'],[710,555,30,22,0,100,'M'],[700,515,28,17,0,35,'B'],[730,500,28,14,0,20,'B'],[690,490,36,12,0,20,'D'],
  [535,585,40,32,0,180,'G'],[570,580,34,16,0,90,'M'],[610,580,28,18,-20,90,'M'],[560,630,28,22,-15,34,'P'],[590,620,34,12,-28,60,'M'],[625,600,34,14,-30,60,'B'],[660,605,28,18,-30,50,'B'],
  [510,650,28,16,0,90,'M'],[550,650,16,14,0,45,'D'],[568,650,12,18,0,36,'B'],[610,645,24,18,0,55,'P'],[650,640,30,16,-20,38,'P'],
  [445,565,28,18,0,40,'P'],[450,540,28,12,0,20,'P'],[540,530,32,16,0,42,'P'],[595,530,28,10,0,20,'P'],[580,540,16,12,0,16,'G'],[620,510,14,9,0,8,'P'],
  [590,680,28,14,0,30,'P'],[620,680,20,14,0,12,'G'],[700,670,34,18,0,30,'P'],[690,640,22,18,0,18,'P'],[735,680,18,16,0,16,'D'],[760,650,24,14,0,16,'P'],
  [775,670,16,12,0,12,'P'],[770,705,24,10,0,30,'P'],[810,700,28,12,0,50,'M'],[790,665,18,16,0,16,'P'],[840,660,26,16,0,20,'P'],
  [935,600,66,32,0,240,'M'],[930,590,36,24,0,80,'B'],[885,640,28,14,0,45,'P'],[905,650,26,20,0,55,'P'],[970,610,18,20,0,30,'B'],[955,640,26,9,0,20,'P'],
  [900,680,85,10,-3,100,'P'],[975,685,48,9,-3,70,'M'],[850,685,34,9,0,30,'P'],[990,660,20,14,0,14,'B'],[1020,640,14,12,0,6,'P'],[1050,650,16,9,0,7,'P']
];
(function () {
  var seed = 20240611;
  function R() { seed = (seed * 1664525 + 1013904223) % 4294967296; return seed / 4294967296; }
  var D = [[1,0],[-1,0],[0,1],[0,-1],[1,1],[-1,-1],[1,-1],[-1,1]];
  var out = { g: '', t: '', b: '', p: '' };
  CL.forEach(function (c) {
    var a = c[4] * Math.PI / 180, ca = Math.cos(a), sa = Math.sin(a), m = MIX[c[6]];
    var walks = Math.round(c[5] * 1.8);
    for (var i = 0; i < walks; i++) {
      var ang = R() * 6.2832, rad = Math.pow(R(), .6);
      var u = Math.cos(ang) * rad * c[2], w = Math.sin(ang) * rad * c[3];
      var x = Math.round(c[0] + u * ca - w * sa), y = Math.round(c[1] + u * sa + w * ca);
      var k = m[Math.floor(R() * m.length)];
      var len = 3 + Math.floor(R() * 5), dir = D[Math.floor(R() * 8)];
      for (var j = 0; j < len; j++) {
        if (R() > .3) out[k] += 'M' + x + ' ' + y + 'h1v1h-1z';
        if (R() < .3) dir = D[Math.floor(R() * 8)];
        x += dir[0]; y += dir[1];
      }
    }
  });
  var g = document.getElementById('speck');
  ['p', 'b', 't', 'g'].forEach(function (k) { el('path', { d: out[k], fill: COL[k] }, g); });
})();

/* clinics: coordinates read from the map, two source frames */
var A = [1277,81,1342,85,1357,88,1297,133,1356,135,1439,136,1465,304,767,478,335,608,360,665,386,673,423,717,452,700,451,714,476,708,493,722,500,765,449,793,454,857,381,878,517,592,527,589,615,590,626,585,707,590,857,544,932,554,995,477,1009,493,1017,565,1095,549,812,618,911,612,794,644,789,679,736,688,735,704,795,695,835,687,932,716,1020,644,1082,734,770,737,682,738,667,715,586,724,608,728,616,714,630,731,643,749,580,750,567,765,810,803,739,855,745,863,594,931,549,964,672,1012,802,992,998,1050,894,1269,1237,972,1297,984,1404,995,1228,1090,1265,1080,1275,1078,1448,706,1546,773,1553,851,1542,896,1473,927,1176,478,1187,472,1197,498,1258,451,1280,450,1288,478,1245,513,1210,528,1160,563,1181,575,1197,581,1213,581,1218,600,1215,610,1270,553,1312,527,1312,538,1357,508,1430,520,1404,545,1413,568,1468,591,1407,600,1350,604,1458,618,1453,623,1527,598,1517,522,1537,451];
var B = [412,249,307,283,470,290,535,300,536,332,589,337,617,359,657,357,242,335,261,322,301,338,321,366,338,372,370,369,442,388,435,405,368,409,340,423,318,427,261,431,257,449,280,456,319,453,364,468,283,497,186,452,543,379,502,394,510,415,500,427,525,425,476,422,462,449,629,432,658,429,664,429,651,463,683,477,726,420,739,430,756,451,730,467,735,489,777,477,669,516,382,522,400,549,390,563,409,563,382,582,437,552,446,591,456,614,508,614,562,530,584,517,643,565,667,565,736,567,775,548,767,519,777,519,840,557,563,603,575,603,612,617,689,618,736,598,794,602,750,628,765,652,770,663,834,653,640,637,622,653,648,670,647,696,695,659,696,706,530,663,540,655,546,650,548,661,372,656,776,704,797,701,806,678,829,698,800,738,796,746,814,736,707,738,708,756,742,784,763,805,876,701,905,688,920,683,921,702,948,671,959,683,948,719,965,727,876,736,890,741,995,701,1010,681,1010,659,939,638,1005,746,1012,759,999,803,953,835,976,842,981,857,941,855,1015,845,1033,871,972,897,970,917,912,949,938,953,834,939,813,945,755,969,730,981,728,997,778,1003,633,895,437,924,505,989,510,1049,534,1052,306,1003,304,952,298,953,250,1020,245,1022,54,995,123,927,192,896,205,851,196,773,210,788,221,784,326,826,329,833,352,875,381,885,98,706,177,598,118,591,103,623,109,619,57,601,63,567,54,545,80,520,166,522,889,253,957,261,979,224,1018,252,1004,287,965,307,823,314,1008,351];
(function () {
  var g = document.getElementById('dots');
  function put(list, ox, oy) {
    for (var i = 0; i < list.length; i += 2)
      el('circle', { cx: (ox + list[i] / 3).toFixed(1), cy: (oy + list[i + 1] / 3).toFixed(1), r: 3.4, class: 'dot-o' }, g);
  }
  el('circle', { cx: 1044, cy: 506.5, r: 3.4, class: 'dot-g' }, g);
  put(A, 370, 340);
  put(B, 820, 340);
  el('circle', { cx: 585.3, cy: 458.3, r: 3.4, class: 'dot-g' }, g);
  el('circle', { cx: 775.7, cy: 706, r: 3.4, class: 'dot-b' }, g);
})();
```
